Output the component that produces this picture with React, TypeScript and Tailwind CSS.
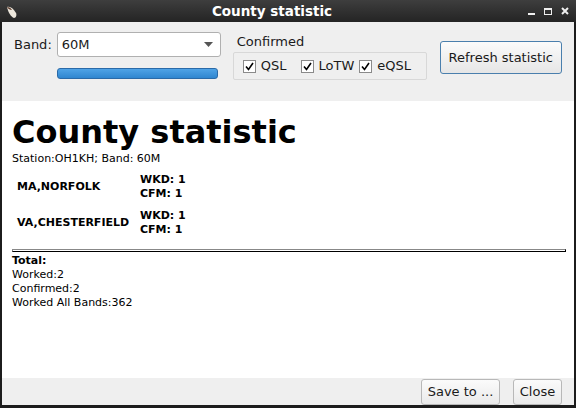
import React from 'react'

const font = { fontFamily: '"DejaVu Sans", sans-serif' }

const Check: React.FC<{ label: string; className?: string }> = ({ label, className = '' }) => (
  <label className={`flex items-center gap-[5px] ${className}`}>
    <span className="w-[13px] h-[13px] border border-[#8a8a8a] bg-white flex items-center justify-center">
      <svg width="9" height="9" viewBox="0 0 9 9">
        <path d="M1 4.5 L3.5 7.5 L8 1" fill="none" stroke="#000" strokeWidth="1.6" />
      </svg>
    </span>
    <span className="text-[13px] text-[#1a1a1a]">{label}</span>
  </label>
)

const rows = [
  { name: 'MA,NORFOLK', wkd: 1, cfm: 1 },
  { name: 'VA,CHESTERFIELD', wkd: 1, cfm: 1 }
]

export default function App() {
  return (
    <div className="w-[576px] h-[408px] bg-[#1c1c1c] flex flex-col overflow-hidden" style={font}>
      {/* title bar */}
      <div className="h-[22px] flex items-center px-[4px] bg-gradient-to-b from-[#3e3e3e] to-[#242424] relative">
        <svg width="16" height="16" viewBox="0 0 16 16" className="mt-[1px] relative z-10">
          <path d="M3 3 C6 2 9 4 12 9 C13 11 12 14 10 14 C7 13 4 8 3 3 Z" fill="#ece6dc" />
          <path d="M3 3 C5 3 7 4 8 6 C6 6 4 5 3 3 Z" fill="#5a3a2a" />
        </svg>
        <div className="absolute inset-0 pr-[32px] flex items-center justify-center text-[13.5px] font-bold text-white">
          County statistic
        </div>
        <div className="ml-auto flex items-center gap-[9px] pr-[3px] text-white relative z-10">
          <span className="w-[7px] h-[2px] bg-[#eee] mt-[6px]" />
          <span className="w-[8px] h-[7px] border border-[#eee] border-t-2" />
          <svg width="8" height="8" viewBox="0 0 8 8">
            <path d="M1 1 L7 7 M7 1 L1 7" stroke="#eee" strokeWidth="2" />
          </svg>
        </div>
      </div>

      <div className="flex-1 mx-[2px] mb-[3px] flex flex-col bg-[#efefef]">
        {/* controls */}
        <div className="h-[79px] flex px-[12px] text-[13px] text-[#1a1a1a]">
          <div className="flex flex-col pt-[10px]">
            <div className="flex items-center gap-[5px]">
              <span>Band:</span>
              <div className="w-[164px] h-[25px] bg-white border border-[#b0b0b0] rounded-[3px] flex items-center px-[4px]">
                <span>60M</span>
                <svg className="ml-auto mr-[3px]" width="9" height="5" viewBox="0 0 9 5">
                  <path d="M0 0 L9 0 L4.5 5 Z" fill="#555" />
                </svg>
              </div>
            </div>
            <div className="ml-[43px] mt-[11px] w-[161px] h-[11px] rounded-[3px] border border-[#2a6aa8] bg-gradient-to-b from-[#4fa3e6] to-[#2f86d0]" />
          </div>
          <div className="flex flex-col ml-[12px] pt-[12px]">
            <span className="ml-[4px] leading-[15px]">Confirmed</span>
            <div className="mt-[3px] w-[194px] h-[28px] border border-[#d8d8d8] rounded-[2px] flex items-center pl-[9px]">
              <Check label="QSL" />
              <Check label="LoTW" className="ml-[14px]" />
              <Check label="eQSL" className="ml-[5px]" />
            </div>
          </div>
          <div className="ml-[13px] pt-[19px]">
            <button className="w-[122px] h-[33px] border border-[#4a7fad] rounded-[3px] bg-gradient-to-b from-[#fbfbfb] to-[#e6e6e6] text-[13px] text-[#1a1a1a]">
              Refresh statistic
            </button>
          </div>
        </div>

        {/* report */}
        <div className="flex-1 bg-white px-[10px] pt-[12px] text-[11px] text-black leading-[14px]">
          <h1 className="text-[32px] font-bold leading-[38px]">County statistic</h1>
          <div className="mt-[1px]">Station:OH1KH; Band: 60M</div>
          <table className="mt-[3px] font-bold">
            <tbody>
              {rows.map(r => (
                <tr key={r.name}>
                  <td className="pl-[5px] w-[128px] h-[36px] align-middle">{r.name}</td>
                  <td className="align-middle leading-[14px]">
                    <div>WKD: {r.wkd}</div>
                    <div>CFM: {r.cfm}</div>
                  </td>
                </tr>
              ))}
            </tbody>
          </table>
          <div className="mt-[8px] mr-[-2px] h-[3px] border border-t-[#888] border-l-[#888] border-b-black border-r-black" />
          <div className="font-bold mt-[2px]">Total:</div>
          <div>Worked:2</div>
          <div>Confirmed:2</div>
          <div>Worked All Bands:362</div>
        </div>

        {/* footer */}
        <div className="h-[27px] flex items-start justify-end gap-[13px] pr-[12px] pt-[1px] text-[13px] text-[#1a1a1a]">
          <button className="w-[79px] h-[26px] border border-[#b8b8b8] rounded-[3px] bg-gradient-to-b from-[#fbfbfb] to-[#eaeaea]">
            Save to ...
          </button>
          <button className="w-[49px] h-[26px] border border-[#b8b8b8] rounded-[3px] bg-gradient-to-b from-[#fbfbfb] to-[#eaeaea]">
            Close
          </button>
        </div>
      </div>
    </div>
  )
}
